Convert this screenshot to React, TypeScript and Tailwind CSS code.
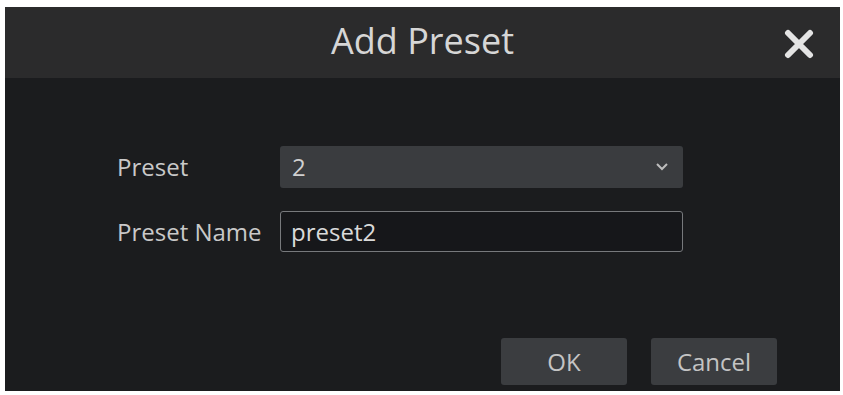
import React from "react";

export default function App() {
  return (
    <div
      className="w-[843px] h-[395px] bg-white pt-[7px] pl-[5px]"
      style={{ fontFamily: '"Open Sans", "Noto Sans", sans-serif' }}
    >
      <div className="w-[835px] h-[384px] bg-[#1b1c1e] flex flex-col">
        <div className="h-[71px] bg-[#2b2b2c] relative flex items-center justify-center shrink-0">
          <span className="text-[36px] text-[#d6d6d6] leading-none -mt-[3px]">Add Preset</span>
          <svg
            className="absolute right-[25px] top-[22px]"
            width="32"
            height="30"
            viewBox="0 0 32 30"
          >
            <path d="M5 4 L27 26 M27 4 L5 26" stroke="#e4e4e4" strokeWidth="6" strokeLinecap="round" />
          </svg>
        </div>
        <div className="flex-1 flex flex-col">
          <div className="pl-[112px] pt-[68px] flex flex-col gap-[23px]">
            <div className="flex items-center h-[42px]">
              <span className="w-[163px] text-[24px] leading-none text-[#c9c9c9]">Preset</span>
              <div className="w-[403px] h-[42px] bg-[#3a3c3f] rounded-[3px] flex items-center justify-between pl-[12px] pr-[14px]">
                <span className="text-[24px] leading-none text-[#d0d0d0]">2</span>
                <svg width="14" height="10" viewBox="0 0 14 10">
                  <path d="M2 2 L7 7 L12 2" stroke="#bdbdbd" strokeWidth="2" fill="none" />
                </svg>
              </div>
            </div>
            <div className="flex items-center h-[41px]">
              <span className="w-[163px] text-[24px] leading-none text-[#c9c9c9]">Preset Name</span>
              <div className="w-[403px] h-[41px] bg-[#16171a] border border-[#77797c] rounded-[3px] flex items-center pl-[10px]">
                <span className="text-[24px] leading-none text-[#dadada]">preset2</span>
              </div>
            </div>
          </div>
          <div className="mt-auto mb-[6px] flex justify-end gap-[24px] pr-[63px]">
            <div className="w-[126px] h-[47px] bg-[#3b3d40] rounded-[3px] flex items-center justify-center text-[24px] leading-none text-[#c4c4c4]">
              OK
            </div>
            <div className="w-[126px] h-[47px] bg-[#3b3d40] rounded-[3px] flex items-center justify-center text-[24px] leading-none text-[#c4c4c4]">
              Cancel
            </div>
          </div>
        </div>
      </div>
    </div>
  );
}
